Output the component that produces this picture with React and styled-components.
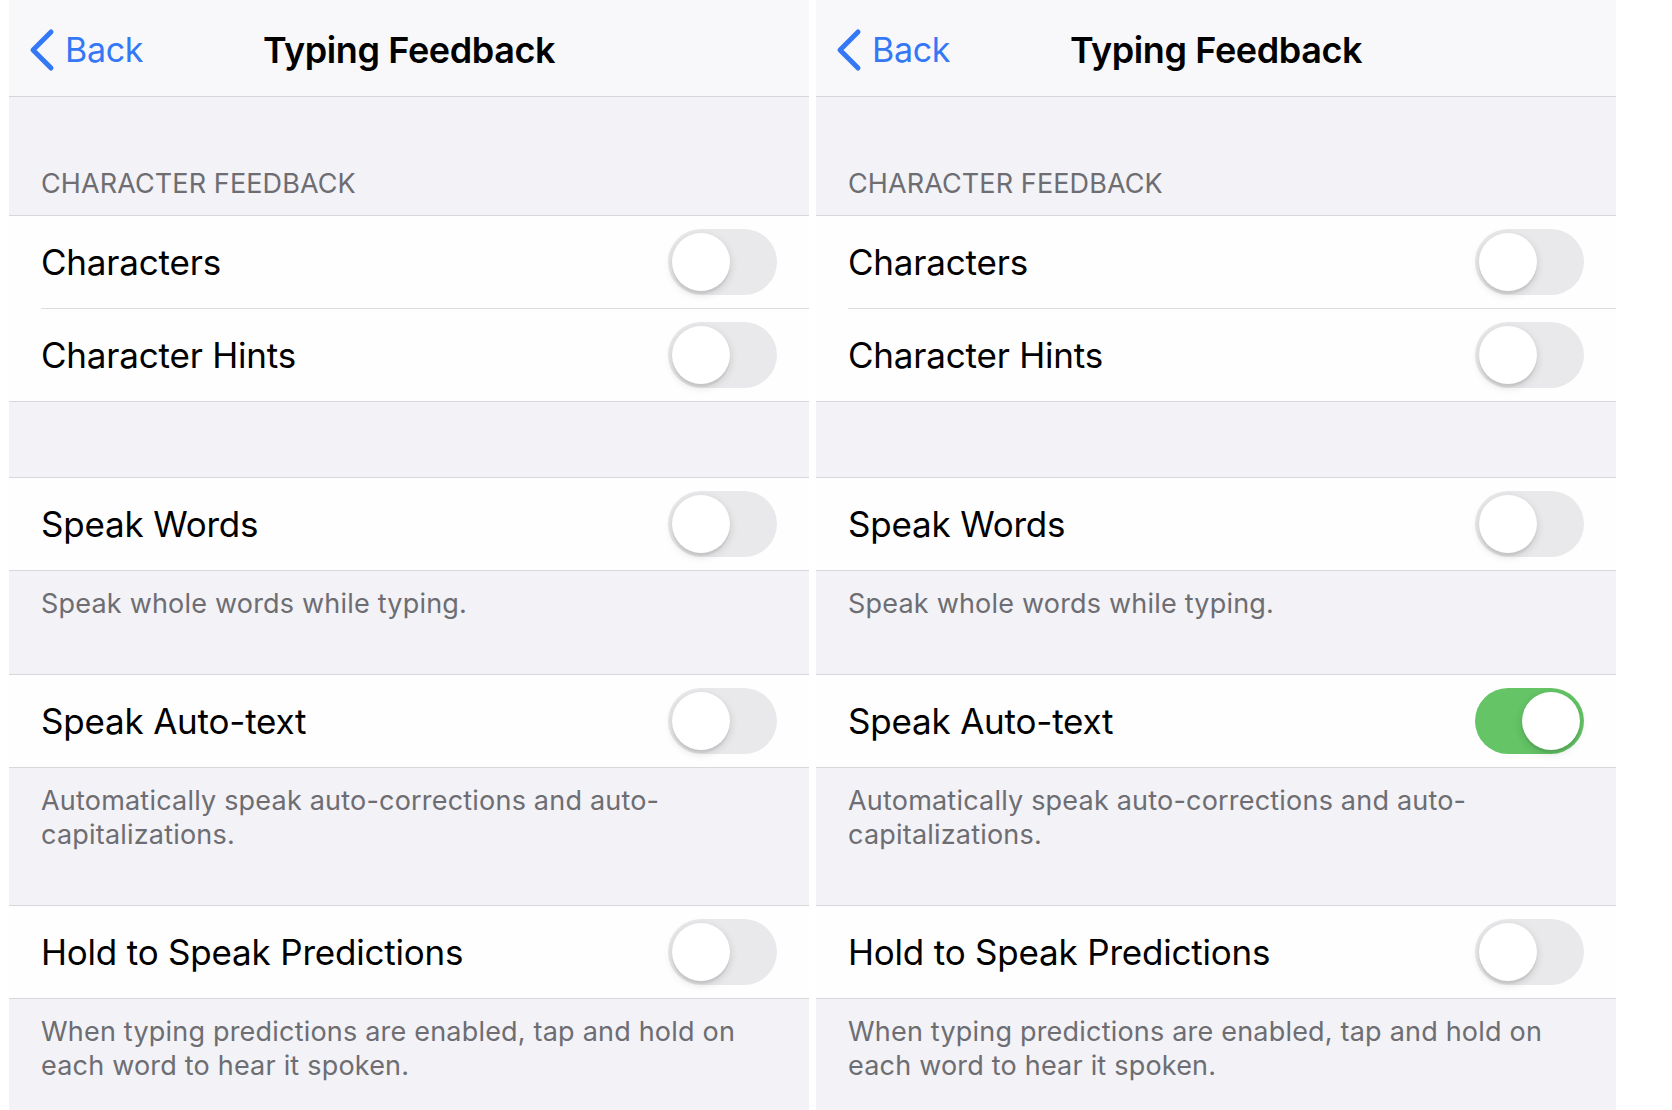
import React from "react";
import styled, { createGlobalStyle } from "styled-components";

const GlobalStyle = createGlobalStyle`
  html, body {
    margin: 0;
    padding: 0;
    background: #ffffff;
    font-family: Inter, "Noto Sans", "Liberation Sans", sans-serif;
    -webkit-font-smoothing: antialiased;
  }
`;

const sections = [
  {
    header: "CHARACTER FEEDBACK",
    rows: [{ label: "Characters" }, { label: "Character Hints" }],
  },
  {
    rows: [{ label: "Speak Words" }],
    footer: "Speak whole words while typing.",
  },
  {
    rows: [{ label: "Speak Auto-text", key: "autotext" }],
    footer: "Automatically speak auto-corrections and auto-capitalizations.",
  },
  {
    rows: [{ label: "Hold to Speak Predictions" }],
    footer:
      "When typing predictions are enabled, tap and hold on each word to hear it spoken.",
  },
];

const BackChevron = () => (
  <svg width="26" height="44" viewBox="0 0 26 44">
    <polyline
      points="22,4 4,22 22,40"
      fill="none"
      stroke="#3478f6"
      strokeWidth="5"
      strokeLinecap="round"
      strokeLinejoin="round"
    />
  </svg>
);

const Toggle = ({ on }) => (
  <Track $on={on}>
    <Knob $on={on} />
  </Track>
);

const Screen = ({ autoText }) => (
  <Panel>
    <NavBar>
      <BackLink>
        <BackChevron />
        <span>Back</span>
      </BackLink>
      <Title>Typing Feedback</Title>
      <div />
    </NavBar>

    {sections.map((section, i) => (
      <React.Fragment key={i}>
        {section.header ? (
          <SectionHeader>{section.header}</SectionHeader>
        ) : (
          i > 0 && !sections[i - 1].footer && <Spacer />
        )}
        <Group>
          {section.rows.map((row, j) => (
            <Row key={row.label}>
              <RowInner $last={j === section.rows.length - 1}>
                <Label>{row.label}</Label>
                <Toggle on={row.key === "autotext" && autoText} />
              </RowInner>
            </Row>
          ))}
        </Group>
        {section.footer && <Footer>{section.footer}</Footer>}
      </React.Fragment>
    ))}
  </Panel>
);

const App = () => (
  <>
    <GlobalStyle />
    <Page>
      <Screen autoText={false} />
      <Screen autoText={true} />
    </Page>
  </>
);

const Page = styled.div`
  display: flex;
  align-items: stretch;
  gap: 7px;
  padding-left: 9px;
  height: 1110px;
  overflow: hidden;
  background: #ffffff;
`;

const Panel = styled.div`
  width: 800px;
  flex-shrink: 0;
  background: #f2f2f7;
`;

const NavBar = styled.div`
  height: 97px;
  box-sizing: border-box;
  background: #f8f8fa;
  border-bottom: 1.5px solid #d6d6da;
  display: grid;
  grid-template-columns: 1fr auto 1fr;
  align-items: center;
  padding: 4px 20px 0 20px;
`;

const BackLink = styled.div`
  display: flex;
  align-items: center;
  gap: 10px;
  color: #3478f6;
  font-size: 34px;
  letter-spacing: -0.3px;
  span {
    margin-top: -1px;
  }
`;

const Title = styled.div`
  font-size: 36px;
  font-weight: 600;
  color: #000;
  letter-spacing: -0.4px;
`;

const SectionHeader = styled.div`
  height: 118px;
  box-sizing: border-box;
  display: flex;
  align-items: flex-end;
  padding: 0 32px 15px;
  font-size: 27px;
  color: #6d6d72;
  letter-spacing: 0.1px;
`;

const Spacer = styled.div`
  height: 75px;
`;

const Group = styled.div`
  background: #fefefe;
  border-top: 1.5px solid #d8d8dc;
  border-bottom: 1.5px solid #d8d8dc;
`;

const Row = styled.div`
  padding-left: 32px;
`;

const RowInner = styled.div`
  height: 92px;
  display: flex;
  align-items: center;
  justify-content: space-between;
  padding-right: 32px;
  border-bottom: ${({ $last }) => ($last ? "none" : "1.5px solid #dcdce0")};
`;

const Label = styled.div`
  font-size: 35px;
  color: #000;
  letter-spacing: -0.2px;
`;

const Track = styled.div`
  position: relative;
  width: 109px;
  height: 66px;
  border-radius: 33px;
  background: ${({ $on }) => ($on ? "#64c466" : "#e9e9eb")};
  flex-shrink: 0;
`;

const Knob = styled.div`
  position: absolute;
  top: 4px;
  left: ${({ $on }) => ($on ? "47px" : "4px")};
  width: 58px;
  height: 58px;
  border-radius: 50%;
  background: #ffffff;
  box-shadow: 0 3px 8px rgba(0, 0, 0, 0.15), 0 3px 1px rgba(0, 0, 0, 0.06);
`;

const Footer = styled.div`
  padding: 16px 32px 53px;
  font-size: 27px;
  line-height: 34px;
  color: #6d6d72;
  letter-spacing: 0.2px;
`;

export default App;
